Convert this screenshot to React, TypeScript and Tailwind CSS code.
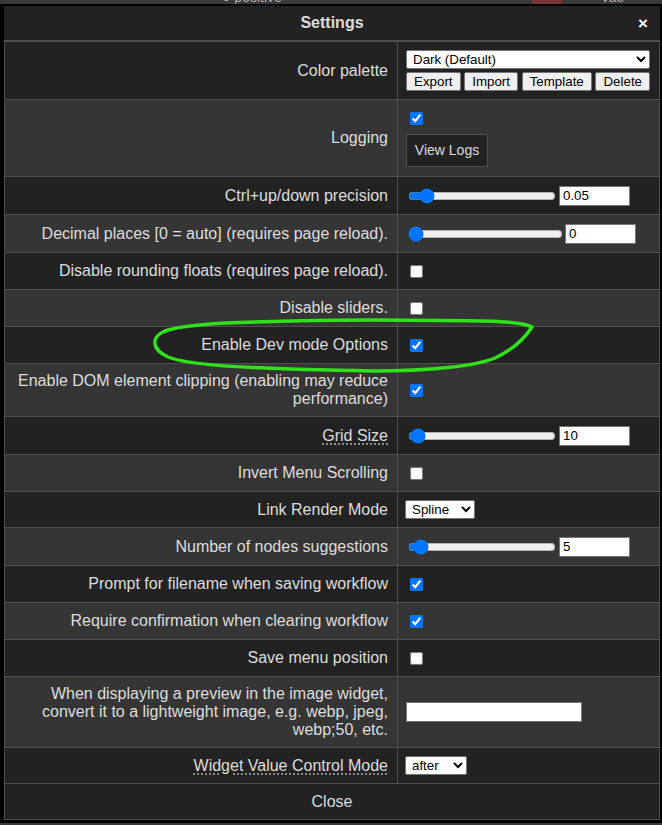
import React from "react";
import clsx from "clsx";

const labelCls =
  "w-[393px] shrink-0 border-r border-[#4f4f4f] flex items-center justify-end pl-[8px] pr-[9px] text-right text-[16px] leading-[18px] text-[#ddd]";

function Row({
  label,
  h,
  shade,
  children,
}: {
  label: React.ReactNode;
  h: string;
  shade?: boolean;
  children?: React.ReactNode;
}) {
  return (
    <div className={clsx("flex border-b border-[#4f4f4f]", h, shade ? "bg-[#353535]" : "bg-[#222]")}>
      <div className={labelCls}>{label}</div>
      <div className="flex-1 flex items-center pl-[8px]">{children}</div>
    </div>
  );
}

function Check({ on }: { on?: boolean }) {
  return <input type="checkbox" defaultChecked={on} className="ml-[4px] w-[13px] h-[13px]" />;
}

function Slider({
  w,
  gap,
  min,
  max,
  step,
  value,
  text,
}: {
  w: string;
  gap: string;
  min: number;
  max: number;
  step: number;
  value: number;
  text: string;
}) {
  return (
    <div className="flex items-center">
      <input type="range" min={min} max={max} step={step} defaultValue={value} className={clsx("ml-[2px]", w)} />
      <input
        type="text"
        defaultValue={text}
        className={clsx(
          "w-[71px] h-[20px] bg-white text-black border border-[#767676] px-[3px] text-[13.3333px]",
          gap
        )}
      />
    </div>
  );
}

const btn =
  "h-[19px] px-[7px] bg-[#efefef] border border-[#767676] rounded-[2px] text-black text-[13.3333px] leading-none";

const sel =
  "h-[19px] bg-white text-black border border-[#767676] rounded-[2px] text-[13.3333px] pl-[2px]";

export default function App() {
  return (
    <div className="relative w-[662px] h-[825px] overflow-hidden bg-[#3a3a3a] font-['Liberation_Sans',Arial,sans-serif]">
      {/* bit of the canvas behind the dialog */}
      <div className="h-[4px] overflow-hidden flex text-[14px] leading-[14px] text-[#aaa]">
        <span className="ml-[222px] -mt-[10px]">● positive</span>
        <span className="ml-[250px] -mt-[10px] w-[30px] h-[14px] bg-[#7a3434]"></span>
        <span className="ml-[40px] -mt-[10px]">vae</span>
      </div>

      <div className="border-l-[4px] border-r-[2px] border-t-[2px] border-b-[3px] border-black bg-[#222]">
        {/* title */}
        <div className="h-[34px] grid grid-cols-[1fr_auto_1fr] items-center">
          <span></span>
          <span className="font-bold text-[16px] text-[#ddd]">Settings</span>
          <span className="justify-self-end pr-[12px] font-bold text-[17px] leading-none text-white">×</span>
        </div>

        <div className="border-t-2 border-x border-b border-[#4f4f4f]">
          <Row label="Color palette" h="h-[58px]">
            <div className="flex flex-col w-[244px] gap-[3px]">
              <select className={clsx(sel, "w-[244px]")} defaultValue="dark">
                <option value="dark">Dark (Default)</option>
              </select>
              <div className="flex justify-between">
                <button className={btn}>Export</button>
                <button className={btn}>Import</button>
                <button className={btn}>Template</button>
                <button className={btn}>Delete</button>
              </div>
            </div>
          </Row>

          <Row label="Logging" h="h-[77px]" shade>
            <div className="flex flex-col items-start">
              <input type="checkbox" defaultChecked className="ml-[4px] my-[3px] w-[13px] h-[13px]" />
              <button className="mt-[6px] h-[33px] w-[82px] bg-[#222] border border-[#4f4f4f] text-[14px] text-[#ddd]">
                View Logs
              </button>
            </div>
          </Row>

          <Row label="Ctrl+up/down precision" h="h-[38px]">
            <Slider w="w-[148px]" gap="ml-[3px]" min={0.01} max={0.5} step={0.01} value={0.05} text="0.05" />
          </Row>

          <Row label="Decimal places [0 = auto] (requires page reload)." h="h-[38px]" shade>
            <Slider w="w-[155px]" gap="ml-[2px]" min={0} max={6} step={1} value={0} text="0" />
          </Row>

          <Row label="Disable rounding floats (requires page reload)." h="h-[37px]">
            <Check />
          </Row>

          <Row label="Disable sliders." h="h-[37px]" shade>
            <Check />
          </Row>

          <Row label="Enable Dev mode Options" h="h-[37px]">
            <Check on />
          </Row>

          <Row label="Enable DOM element clipping (enabling may reduce performance)" h="h-[53px]" shade>
            <Check on />
          </Row>

          <Row
            label={<span className="underline decoration-dotted decoration-[#aaa] underline-offset-[3px]">Grid Size</span>}
            h="h-[38px]"
          >
            <Slider w="w-[148px]" gap="ml-[3px]" min={1} max={500} step={1} value={10} text="10" />
          </Row>

          <Row label="Invert Menu Scrolling" h="h-[37px]" shade>
            <Check />
          </Row>

          <Row label="Link Render Mode" h="h-[36px]">
            <select className={clsx(sel, "w-[70px] -ml-[1px]")} defaultValue="spline">
              <option value="spline">Spline</option>
            </select>
          </Row>

          <Row label="Number of nodes suggestions" h="h-[38px]" shade>
            <Slider w="w-[148px]" gap="ml-[3px]" min={1} max={100} step={1} value={5} text="5" />
          </Row>

          <Row label="Prompt for filename when saving workflow" h="h-[37px]">
            <Check on />
          </Row>

          <Row label="Require confirmation when clearing workflow" h="h-[37px]" shade>
            <Check on />
          </Row>

          <Row label="Save menu position" h="h-[37px]">
            <Check />
          </Row>

          <Row
            label="When displaying a preview in the image widget, convert it to a lightweight image, e.g. webp, jpeg, webp;50, etc."
            h="h-[71px]"
            shade
          >
            <input type="text" className="w-[176px] h-[20px] bg-white text-black border border-[#767676] text-[13.3333px]" />
          </Row>

          <Row
            label={
              <span className="underline decoration-dotted decoration-[#aaa] underline-offset-[3px]">
                Widget Value Control Mode
              </span>
            }
            h="h-[36px]"
          >
            <select className={clsx(sel, "w-[62px] -ml-[1px]")} defaultValue="after">
              <option value="after">after</option>
            </select>
          </Row>

          <div className="h-[35px] flex items-center justify-center bg-[#222] text-[16px] text-[#ddd]">Close</div>
        </div>
      </div>

      {/* hand-drawn highlight around the dev mode row */}
      <svg className="absolute top-0 left-0 w-[662px] h-[825px] pointer-events-none" viewBox="0 0 662 825">
        <path
          d="M 532 327 C 522 321, 482 320.5, 440 320.5 C 380 319.5, 300 320, 240 322.5 C 200 324, 176 327, 165 331 C 151 337, 151 349, 168 357 C 190 366, 260 369, 373 371 C 430 371, 476 366, 495 358 C 514 349, 525 338, 532 327"
          fill="none"
          stroke="#2fe01a"
          strokeWidth="3.5"
          strokeLinecap="round"
          strokeLinejoin="round"
        />
      </svg>
    </div>
  );
}
